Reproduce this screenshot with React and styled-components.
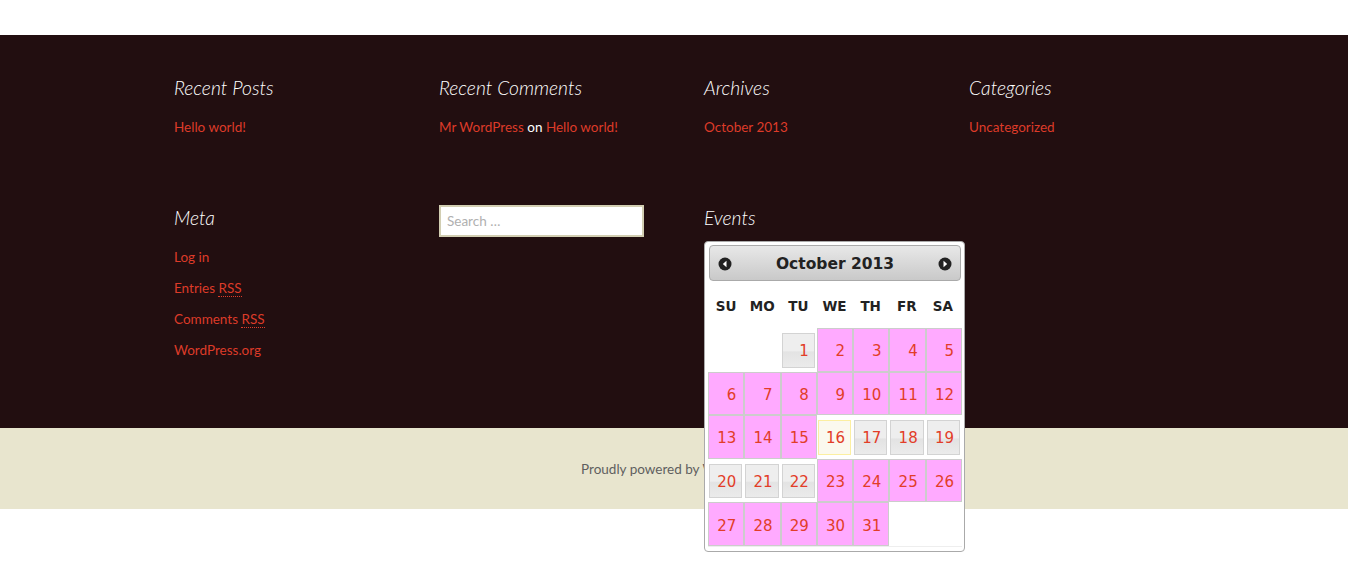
import React from "react";
import styled, { createGlobalStyle } from "styled-components";

const Global = createGlobalStyle`
  html, body { margin: 0; padding: 0; background: #fff; }
  body { font-family: "Lato", "Open Sans", sans-serif; }
`;

const Top = styled.div`
  height: 35px;
  background: #fff;
`;

const Footer = styled.footer`
  background: #220e10;
  padding: 38px 0 62px;
`;

const WidgetGrid = styled.div`
  width: 1040px;
  margin: 0 auto;
  box-sizing: border-box;
  padding: 0 20px;
  display: grid;
  grid-template-columns: repeat(4, 245px);
  column-gap: 20px;
  row-gap: 60px;
`;

const Widget = styled.section`
  position: relative;
  color: #fff;
`;

const Title = styled.h3`
  margin: 0 0 9px;
  font-family: "Lato", "Open Sans", sans-serif;
  font-weight: 300;
  font-style: italic;
  font-size: 19.3px;
  line-height: 29px;
  padding-bottom: 1px;
  color: #fff;
`;

const List = styled.ul`
  list-style: none;
  margin: 0;
  padding: 0;
`;

const Item = styled.li`
  font-size: 13.5px;
  line-height: 31px;
  color: #fff;
`;

const Link = styled.a`
  color: #dd3b29;
  text-decoration: none;
`;

const Abbr = styled.abbr`
  text-decoration: none;
  border-bottom: 1px dotted #dd3b29;
`;

const SearchInput = styled.input`
  box-sizing: border-box;
  width: 205px;
  height: 32px;
  margin-top: 2px;
  border: 2px solid #d2ceb2;
  background: #fff;
  padding: 0 6px;
  font-family: "Lato", "Open Sans", sans-serif;
  font-size: 13.5px;
  color: #333;
  outline: none;
  &::placeholder { color: #b0b0b0; }
`;

const Calendar = styled.div`
  position: absolute;
  top: 38px;
  left: 0;
  z-index: 2;
  width: 261px;
  height: 311px;
  box-sizing: border-box;
  background: #fff;
  border: 1px solid #aaa;
  border-radius: 4px;
  padding: 3px 3px 0 3px;
  font-family: "DejaVu Sans", Verdana, sans-serif;
`;

const CalHeader = styled.div`
  height: 36px;
  box-sizing: border-box;
  margin-left: 1px;
  border: 1px solid #aaa;
  border-radius: 4px;
  background: linear-gradient(#e8e8e8, #c9c9c9);
  display: flex;
  align-items: center;
  justify-content: space-between;
  padding: 1px 8px 0 8px;
`;

const MonthTitle = styled.div`
  font-weight: bold;
  font-size: 15.5px;
  color: #222;
`;

const Arrow = styled.span`
  width: 14px;
  height: 14px;
  display: flex;
`;

const DayNames = styled.div`
  display: grid;
  grid-template-columns: repeat(7, 1fr);
  height: 47px;
  align-items: center;
  text-align: center;
  font-weight: bold;
  font-size: 13.5px;
  color: #222;
  width: 253px;
  padding-top: 2px;
  box-sizing: border-box;
`;

const Days = styled.div`
  display: grid;
  grid-template-columns: repeat(7, 1fr);
  grid-auto-rows: 43.6px;
  width: 254px;
  border-bottom: 1px solid #eee;
`;

const Cell = styled.div`
  box-sizing: border-box;
  display: flex;
  align-items: center;
  justify-content: flex-end;
  font-size: 15px;
  color: #e23d28;
  ${(p) =>
    p.$kind === "event" &&
    `
    background: #ffaaff;
    border: 1px solid #ccc;
    padding: 3px 7px 0 0;
  `}
  ${(p) =>
    (p.$kind === "plain" || p.$kind === "today") &&
    `
    padding: 5px 2px 4px 1px;
    align-items: stretch;
  `}
`;

const Plain = styled.span`
  flex: 1;
  box-sizing: border-box;
  display: flex;
  align-items: center;
  justify-content: flex-end;
  padding: 2px 5px 0 0;
  border: 1px solid ${(p) => (p.$today ? "#fcefa1" : "#d3d3d3")};
  background: ${(p) =>
    p.$today ? "#fbf9ee" : "linear-gradient(#eeeeee 0%, #eeeeee 50%, #e3e3e3 55%, #ebebeb 100%)"};
`;

const ArrowIcon = ({ dir }) => (
  <svg width="14" height="14" viewBox="0 0 14 14">
    <circle cx="7" cy="7" r="6.5" fill="#222" />
    {dir === "prev" ? (
      <polygon points="8.5,3.8 8.5,10.2 4.8,7" fill="#fff" />
    ) : (
      <polygon points="5.5,3.8 5.5,10.2 9.2,7" fill="#fff" />
    )}
  </svg>
);

const SiteInfo = styled.div`
  background: #e8e5ce;
  height: 81px;
  display: flex;
  align-items: center;
  justify-content: center;
  font-size: 13.5px;
  color: #5f5f5f;
`;

const Bottom = styled.div`
  height: 62px;
  background: #fff;
`;

const eventDays = new Set([2, 3, 4, 5, 6, 7, 8, 9, 10, 11, 12, 13, 14, 15, 23, 24, 25, 26, 27, 28, 29, 30, 31]);

export default function App() {
  const cells = [];
  for (let i = 0; i < 2; i++) cells.push(<Cell key={"e" + i} />);
  for (let d = 1; d <= 31; d++) {
    if (eventDays.has(d)) {
      cells.push(
        <Cell key={d} $kind="event">
          {d}
        </Cell>
      );
    } else {
      cells.push(
        <Cell key={d} $kind={d === 16 ? "today" : "plain"}>
          <Plain $today={d === 16}>{d}</Plain>
        </Cell>
      );
    }
  }
  return (
    <>
      <Global />
      <Top />
      <Footer>
        <WidgetGrid>
          <Widget>
            <Title>Recent Posts</Title>
            <List>
              <Item><Link href="#">Hello world!</Link></Item>
            </List>
          </Widget>
          <Widget>
            <Title>Recent Comments</Title>
            <List>
              <Item>
                <Link href="#">Mr WordPress</Link> on <Link href="#">Hello world!</Link>
              </Item>
            </List>
          </Widget>
          <Widget>
            <Title>Archives</Title>
            <List>
              <Item><Link href="#">October 2013</Link></Item>
            </List>
          </Widget>
          <Widget>
            <Title>Categories</Title>
            <List>
              <Item><Link href="#">Uncategorized</Link></Item>
            </List>
          </Widget>
          <Widget>
            <Title>Meta</Title>
            <List>
              <Item><Link href="#">Log in</Link></Item>
              <Item><Link href="#">Entries <Abbr>RSS</Abbr></Link></Item>
              <Item><Link href="#">Comments <Abbr>RSS</Abbr></Link></Item>
              <Item><Link href="#">WordPress.org</Link></Item>
            </List>
          </Widget>
          <Widget>
            <SearchInput placeholder="Search …" />
          </Widget>
          <Widget>
            <Title>Events</Title>
            <Calendar>
              <CalHeader>
                <Arrow><ArrowIcon dir="prev" /></Arrow>
                <MonthTitle>October 2013</MonthTitle>
                <Arrow><ArrowIcon dir="next" /></Arrow>
              </CalHeader>
              <DayNames>
                {["SU", "MO", "TU", "WE", "TH", "FR", "SA"].map((n) => (
                  <span key={n}>{n}</span>
                ))}
              </DayNames>
              <Days>{cells}</Days>
            </Calendar>
          </Widget>
          <Widget />
        </WidgetGrid>
      </Footer>
      <SiteInfo>Proudly powered by WordPress</SiteInfo>
      <Bottom />
    </>
  );
}
